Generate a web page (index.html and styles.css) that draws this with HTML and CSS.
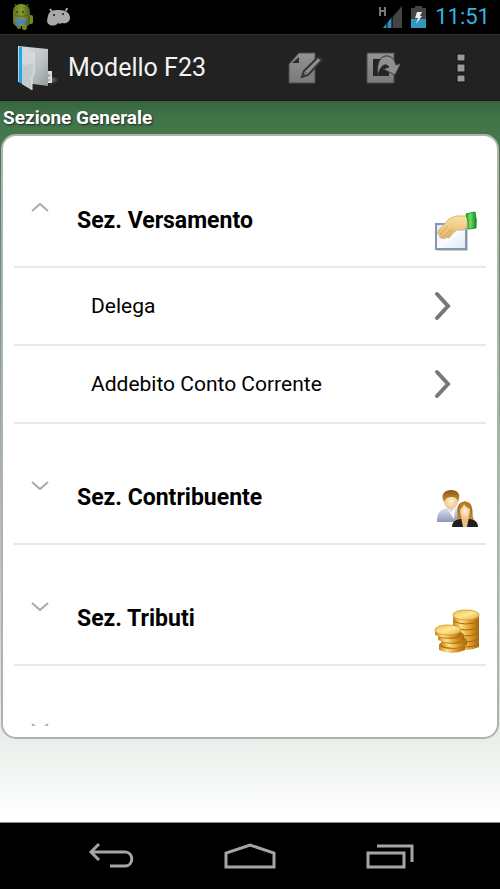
FILE: index.html
```
<!DOCTYPE html>
<html lang="it">
<head>
    <meta charset="UTF-8">
    <meta name="viewport" content="width=device-width, initial-scale=1">
    <title>Modello F23</title>
    <link rel="stylesheet" href="styles.css">
</head>
<body>
<div class="status-bar">
    <svg width="22" height="28" viewBox="0 0 22 28">
        <defs>
            <linearGradient id="droid" x1="0" y1="0" x2="1" y2="0">
                <stop offset="0" stop-color="#61751c"/>
                <stop offset=".5" stop-color="#879c29"/>
                <stop offset="1" stop-color="#4c5f14"/>
            </linearGradient>
        </defs>
        <rect x="16" y="12" width="5" height="9" rx="2" fill="#75882a"/>
        <rect x="5" y="18" width="4" height="8" rx="2" fill="#6c8020"/>
        <rect x="10" y="18" width="5" height="9" rx="2" fill="#708322"/>
        <path d="M1 9C1 4 4 1 9 1s9 3 9 8v10q0 4-4 4H5q-3 0-4-4z" fill="url(#droid)"/>
        <path d="M2 12q8 3 16-1" fill="none" stroke="#5c6b1c"/>
        <path d="M4 3 3 1M15 3l1-2" stroke="#6d8020"/>
        <circle cx="5" cy="9" r="1" fill="#333"/>
        <circle cx="11" cy="9" r="1" fill="#333"/>
        <path d="M3 14l6 3 5-3 1 3-3 2 1 4-4-2-5 3 1-5-2-1z" fill="#4b83bd"/>
    </svg>
    <svg class="debug-icon" width="26" height="20" viewBox="0 0 26 20">
        <path d="M6 5 4 2M20 4l1-3" stroke="#aaa" stroke-width="2"/>
        <path d="M2 9C3 4 7 3 13 3c7 0 11 3 11 8 0 4-4 6-8 5-2 1-3 1-4 0-2 3-6 3-8 2-4-2-3-5-2-9z" fill="#aaa"/>
        <circle cx="8" cy="8" r="1" fill="#111"/>
        <circle cx="17" cy="7" r="1" fill="#111"/>
    </svg>
    <svg class="signal" width="24" height="22" viewBox="0 0 24 22">
        <path d="M1 1v9M6 1v9M1 5h5" fill="none" stroke="#777" stroke-width="2"/>
        <path d="M23 0v22H4z" fill="#444"/>
        <path d="M4 22 13 11v11z" fill="#2e91b9"/>
        <path d="M8 16v6M13 10v12" stroke="#000"/>
    </svg>
    <svg width="15" height="22" viewBox="0 0 15 22">
        <path d="M0 2h4V0h7v2h4v20H0z" fill="#444"/>
        <path d="M0 13h15v9H0z" fill="#3297bf"/>
        <path d="M6 6h5l-2 4h2L5 18l2-6H4z" fill="#eee"/>
    </svg>
    <span class="clock">11:51</span>
</div>

<header class="action-bar">
    <svg class="app-icon" width="42" height="46" viewBox="0 0 42 46">
        <defs>
            <linearGradient id="folder" x1="0" y1="0" x2="1" y2="1">
                <stop offset="0" stop-color="#d9dde0"/>
                <stop offset=".6" stop-color="#bcc1c4"/>
                <stop offset="1" stop-color="#92989b"/>
            </linearGradient>
            <radialGradient id="shade">
                <stop offset="0" stop-color="#777"/>
                <stop offset="1" stop-color="#222"/>
            </radialGradient>
        </defs>
        <ellipse cx="34" cy="35" rx="8" ry="4" fill="url(#shade)"/>
        <path d="M28 26h7v12h-7z" fill="#ddd"/>
        <path d="M32 29v3M32 34v2" stroke="#777"/>
        <path d="M1 1 31 4v37L1 37z" fill="url(#folder)"/>
        <path d="M2 2v35l3 2V2z" fill="#1da8ee"/>
        <path d="M5 2l12 5v22l-2 3v13L5 39z" fill="#d3d8dc"/>
        <path d="M5 20q7 0 12-3v12l-2 3v13L5 39z" fill="#c3cace"/>
        <path d="M17 7v22l-2 3v13" fill="none" stroke="#e3e6e8"/>
    </svg>
    <h1>Modello F23</h1>
    <button type="button" class="action" aria-label="Modifica">
        <svg width="36" height="36" viewBox="0 0 36 36">
            <defs>
                <linearGradient id="metal" x1="0" y1="0" x2="0" y2="1">
                    <stop offset="0" stop-color="#939393"/>
                    <stop offset="1" stop-color="#7b7b7b"/>
                </linearGradient>
            </defs>
            <path d="M12 3h16v30H2V14z" fill="url(#metal)" stroke="#4b4b4b"/>
            <path d="M5 13l7-6v6z" fill="#2b2b2b"/>
            <path d="M31 7l4 3-14 15-6 2 2-6z" fill="#8f8f8f" stroke="#333" stroke-width="2"/>
            <path d="M17 25l3-3" stroke="#555"/>
        </svg>
    </button>
    <button type="button" class="action" aria-label="Esporta">
        <svg width="36" height="36" viewBox="0 0 36 36">
            <path d="M2 3h27v30H2z" fill="url(#metal)" stroke="#4b4b4b"/>
            <path d="M8 9h16v17H8z" fill="#242424"/>
            <path d="M13 25C11 12 16 5 23 6c5 1 7 5 8 9l5-2-6 12-12-6 6-2c-3-4-8-3-11 8z" fill="#8f8f8f" stroke="#333"/>
        </svg>
    </button>
    <button type="button" class="action" aria-label="Altre opzioni">
        <svg width="10" height="30" viewBox="0 0 10 30">
            <path d="M1 1h8v7H1zM1 11h8v8H1zM1 22h8v7H1z" fill="#999" stroke="#111"/>
        </svg>
    </button>
</header>

<main class="content">
    <h2>Sezione Generale</h2>
    <div class="card">
        <div class="list">
            <button type="button" class="group" aria-expanded="true">
                <svg class="indicator" width="18" height="10" viewBox="0 0 18 10"><path d="M1 8l8-7 8 7"/></svg>
                <span class="group-title">Sez. Versamento</span>
                <svg class="group-icon" width="46" height="44" viewBox="0 0 46 44">
                    <defs>
                        <linearGradient id="paper" x1="0" y1="0" x2="1" y2="1">
                            <stop offset="0" stop-color="#dce9f8"/>
                            <stop offset=".5" stop-color="#fafcff"/>
                            <stop offset="1" stop-color="#dce9f6"/>
                        </linearGradient>
                        <linearGradient id="skin" x1="0" y1="0" x2="0" y2="1">
                            <stop offset="0" stop-color="#fbe1a4"/>
                            <stop offset="1" stop-color="#e3b46b"/>
                        </linearGradient>
                        <linearGradient id="cuff" x1="0" y1="0" x2="1" y2="0">
                            <stop offset="0" stop-color="#169b2a"/>
                            <stop offset=".4" stop-color="#75dc6b"/>
                            <stop offset="1" stop-color="#118322"/>
                        </linearGradient>
                    </defs>
                    <path d="M3 14h31v26H3z" fill="#ccc"/>
                    <path d="M2 13h30v25H2z" fill="url(#paper)" stroke="#8496b1" stroke-width="2"/>
                    <path d="M33 5H22l-7 3-10 11q-3 4 1 5-1 4 3 3 1 2 4-1 2 3 5-3l5-4h6l5-3z" fill="url(#skin)" stroke="#d9b26d"/>
                    <path d="M6 23l8-8M9 26l8-8M13 26l7-8" fill="none" stroke="#cfa660"/>
                    <path d="M32 3l9-2q2 8 1 16l-8 1q1-8-2-15z" fill="url(#cuff)" stroke="#169b2a"/>
                </svg>
            </button>
            <button type="button" class="child">
                <span>Delega</span>
                <svg class="arrow" width="18" height="30" viewBox="0 0 18 30"><path d="M3 3l11 12L3 27"/></svg>
            </button>
            <button type="button" class="child">
                <span>Addebito Conto Corrente</span>
                <svg class="arrow" width="18" height="30" viewBox="0 0 18 30"><path d="M3 3l11 12L3 27"/></svg>
            </button>
            <button type="button" class="group" aria-expanded="false">
                <svg class="indicator" width="18" height="10" viewBox="0 0 18 10"><path d="M1 2l8 7 8-7"/></svg>
                <span class="group-title">Sez. Contribuente</span>
                <svg class="group-icon" width="46" height="44" viewBox="0 0 46 44">
                    <defs>
                        <linearGradient id="shirt" x1="0" y1="0" x2="0" y2="1">
                            <stop offset="0" stop-color="#dfe3f1"/>
                            <stop offset="1" stop-color="#8d96b7"/>
                        </linearGradient>
                        <linearGradient id="hair" x1="0" y1="0" x2="0" y2="1">
                            <stop offset="0" stop-color="#8a5a14"/>
                            <stop offset="1" stop-color="#cb9235"/>
                        </linearGradient>
                        <radialGradient id="face">
                            <stop offset="0" stop-color="#fff0d9"/>
                            <stop offset="1" stop-color="#f0c38d"/>
                        </radialGradient>
                    </defs>
                    <path d="M3 34c0-10 3-13 11-14h7c7 1 7 7 7 14z" fill="url(#shirt)"/>
                    <path d="M13 20l4 4 4-4-1 11z" fill="#fff"/>
                    <ellipse cx="17" cy="13" rx="7" ry="8" fill="url(#face)"/>
                    <path d="M10 14C6 7 10 2 17 2c8 0 10 5 7 12-1-4-3-5-6-5-4 0-6 1-8 5z" fill="url(#hair)"/>
                    <path d="M22 33c3-4 0-9 2-15 2-5 10-6 13-1 3 6 0 12 4 16z" fill="url(#hair)"/>
                    <path d="M18 39q0-7 8-8h10q8 1 8 8z" fill="#211f20"/>
                    <path d="M27 29h8l-2 10h-4z" fill="#efbd86"/>
                    <ellipse cx="31" cy="23" rx="5" ry="8" fill="url(#face)"/>
                    <path d="M25 22q3-1 5-6 2 4 7 5v-5l-6-3-6 4z" fill="#b97b25"/>
                </svg>
            </button>
            <button type="button" class="group" aria-expanded="false">
                <svg class="indicator" width="18" height="10" viewBox="0 0 18 10"><path d="M1 2l8 7 8-7"/></svg>
                <span class="group-title">Sez. Tributi</span>
                <svg class="group-icon" width="46" height="46" viewBox="0 0 46 46">
                    <defs>
                        <linearGradient id="coin-edge" x1="0" y1="0" x2="1" y2="0">
                            <stop offset="0" stop-color="#c8841c"/>
                            <stop offset=".3" stop-color="#ffe083"/>
                            <stop offset=".7" stop-color="#d99525"/>
                            <stop offset="1" stop-color="#a8680e"/>
                        </linearGradient>
                        <linearGradient id="coin-top" x1="0" y1="0" x2="1" y2="1">
                            <stop offset="0" stop-color="#efbd4a"/>
                            <stop offset=".5" stop-color="#ffe793"/>
                            <stop offset="1" stop-color="#e2a936"/>
                        </linearGradient>
                    </defs>
                    <path d="M19 6v32q13 6 26 0V6z" fill="url(#coin-edge)"/>
                    <path d="M19 12q13 6 26 0M19 18q13 6 26 0M19 24q13 6 26 0M19 30q13 6 26 0M19 35q13 6 26 0" fill="none" stroke="#a76710"/>
                    <ellipse cx="32" cy="6" rx="13" ry="5" fill="url(#coin-top)" stroke="#dba338"/>
                    <path d="M5 36v5q13 6 26 0v-5z" fill="url(#coin-edge)"/>
                    <ellipse cx="18" cy="36" rx="13" ry="4" fill="#b87818"/>
                    <path d="M7 31v5q13 6 26 0v-5z" fill="url(#coin-edge)"/>
                    <ellipse cx="20" cy="31" rx="13" ry="4" fill="#b87818"/>
                    <path d="M4 26v5q13 6 26 0v-5z" fill="url(#coin-edge)"/>
                    <ellipse cx="17" cy="26" rx="13" ry="4" fill="#b87818"/>
                    <path d="M1 21v5q13 6 26 0v-5z" fill="url(#coin-edge)"/>
                    <ellipse cx="14" cy="21" rx="13" ry="5" fill="url(#coin-top)" stroke="#dba338"/>
                </svg>
            </button>
            <button type="button" class="group" aria-expanded="false" aria-label="Altra sezione">
                <svg class="indicator" width="18" height="10" viewBox="0 0 18 10"><path d="M1 2l8 7 8-7"/></svg>
            </button>
        </div>
    </div>
</main>

<nav class="nav-bar">
    <button type="button" aria-label="Indietro">
        <svg width="48" height="28" viewBox="0 0 48 28">
            <path d="M13 2 5 10l8 8M5 10h34c9 0 9 14 0 14H24"/>
        </svg>
    </button>
    <button type="button" aria-label="Home">
        <svg width="52" height="28" viewBox="0 0 52 28">
            <path d="M2 25V11l24-8 24 8v14z"/>
        </svg>
    </button>
    <button type="button" aria-label="Applicazioni recenti">
        <svg width="50" height="26" viewBox="0 0 50 26">
            <path d="M3 10h36v14H3zM12 3h35v16"/>
        </svg>
    </button>
</nav>
</body>
</html>
```
FILE: styles.css
```
* {
    padding: 0;
    margin: 0;
    box-sizing: border-box;
}

body {
    display: flex;
    flex-direction: column;
    height: 100vh;
    font-family: Roboto, "Noto Sans", sans-serif;
    background: #000;
    color: #000;
}

button {
    border: none;
    background: none;
    font: inherit;
    color: inherit;
    text-align: left;
    cursor: pointer;
}

svg {
    display: block;
    flex: none;
}

.status-bar {
    display: flex;
    align-items: center;
    height: 34px;
    flex: none;
    padding: 0 10px 0 12px;
}

.debug-icon {
    margin-left: 12px;
}

.signal {
    margin-left: auto;
    margin-right: 8px;
}

.clock {
    margin-left: 9px;
    font-size: 22px;
    line-height: 34px;
    color: #33b5e5;
}

.action-bar {
    display: flex;
    align-items: center;
    height: 67px;
    flex: none;
    padding-left: 17px;
    background: #222;
    border-top: 1px solid #303030;
    border-bottom: 1px solid #181818;
}

.action-bar h1 {
    flex: 1;
    margin-left: 9px;
    font-size: 25px;
    font-weight: normal;
    line-height: 32px;
    color: #f3f3f3;
}

.action {
    display: flex;
    align-items: center;
    justify-content: center;
    width: 78px;
    height: 65px;
}

.content {
    display: flex;
    flex-direction: column;
    flex: 1;
    min-height: 0;
    padding: 0 1px 83px;
    background: linear-gradient(rgba(0, 0, 0, .1), transparent 16px), linear-gradient(#3c7044, #fff);
    border-bottom: 1px solid #888;
}

.content h2 {
    flex: none;
    padding-left: 2px;
    font-size: 19px;
    line-height: 33px;
    color: #fff;
    text-shadow: 1px 1px 2px #222;
}

.card {
    flex: 1;
    min-height: 0;
    padding: 11px;
    background: #fff;
    border: 2px solid #b0b2b0;
    border-radius: 15px;
}

.list {
    height: 100%;
    overflow: hidden;
}

.group {
    display: flex;
    align-items: flex-start;
    width: 100%;
    height: 121px;
    padding: 56px 6px 0 17px;
    border-bottom: 2px solid #e8e8e8;
}

.indicator {
    fill: none;
    stroke: #aaa;
    stroke-width: 2;
}

.group-title {
    margin-top: 2px;
    margin-left: 28px;
    font-size: 23px;
    font-weight: bold;
    line-height: 32px;
}

.group-icon {
    margin-top: 8px;
    margin-left: auto;
}

.child {
    display: flex;
    align-items: center;
    justify-content: space-between;
    width: 100%;
    height: 78px;
    padding: 0 34px 0 77px;
    border-bottom: 2px solid #e8e8e8;
    font-size: 21px;
}

.arrow {
    fill: none;
    stroke: #777;
    stroke-width: 4;
    stroke-linecap: round;
}

.nav-bar {
    display: flex;
    align-items: center;
    justify-content: center;
    height: 66px;
    flex: none;
}

.nav-bar button {
    display: flex;
    justify-content: center;
    width: 28%;
}

.nav-bar svg {
    fill: none;
    stroke: #a5a5a5;
    stroke-width: 3;
}
```
